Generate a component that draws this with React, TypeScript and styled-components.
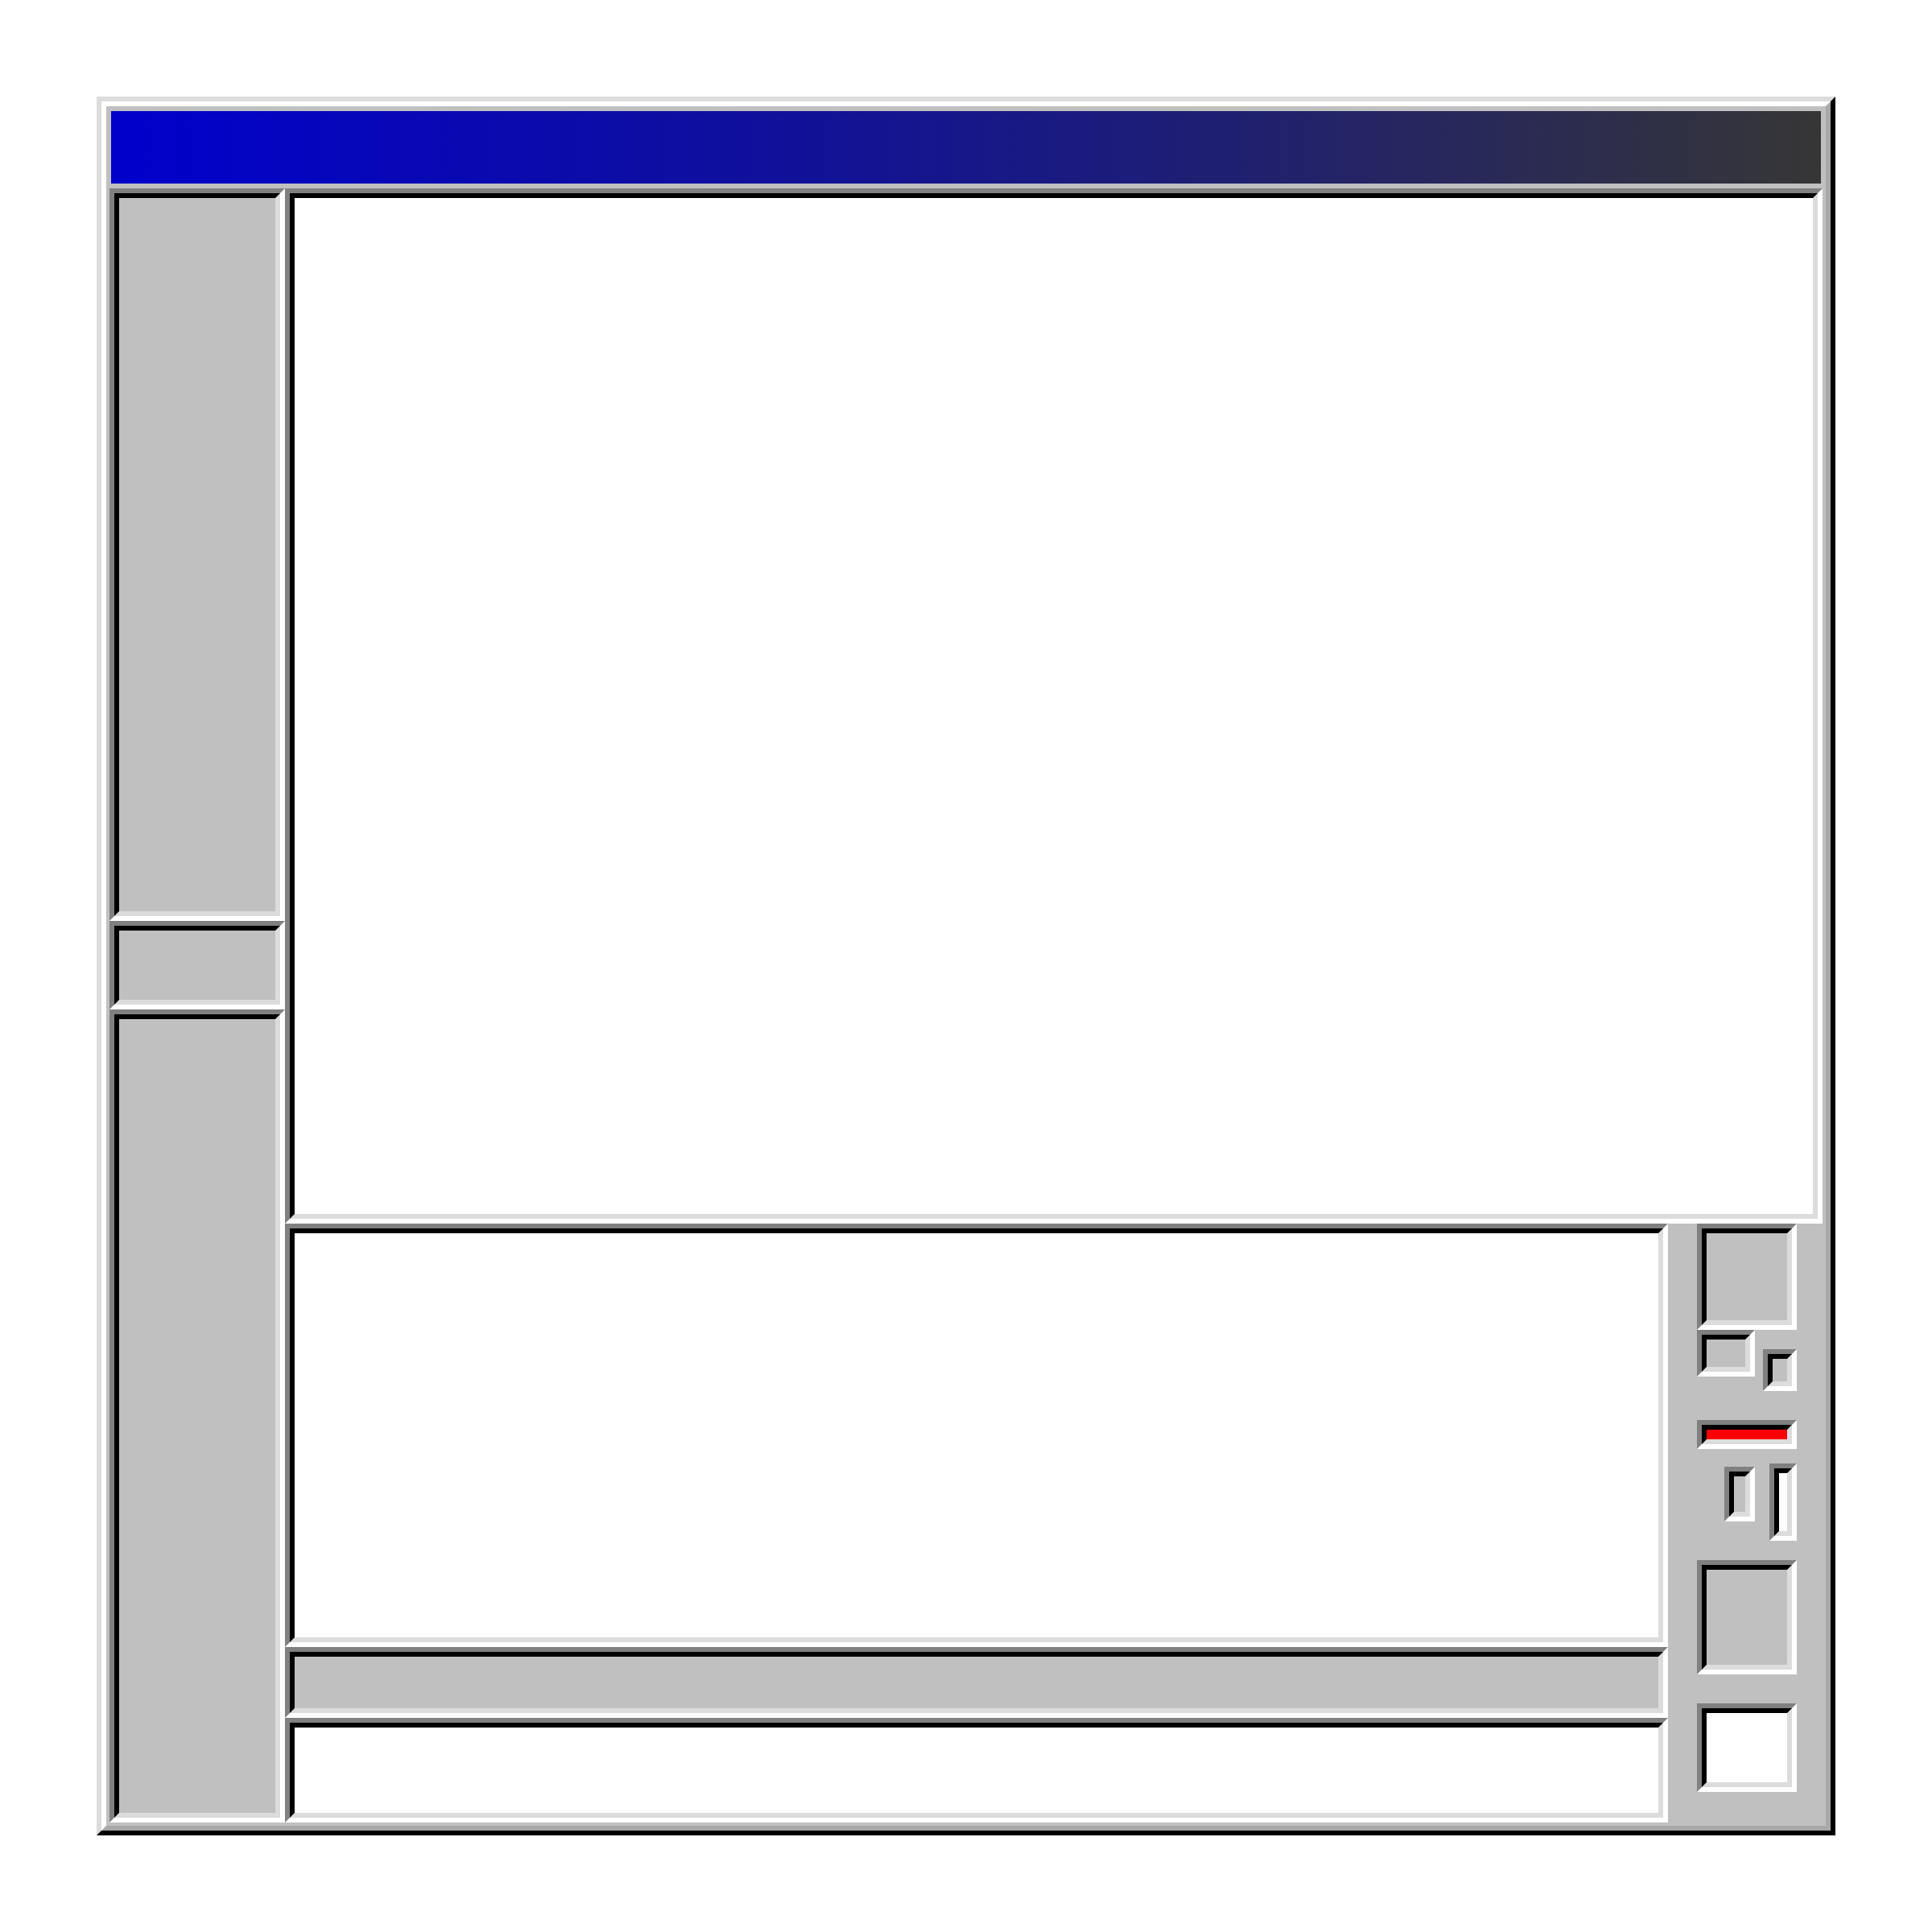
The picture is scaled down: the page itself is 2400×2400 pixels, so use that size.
import React from "react";
import styled, { createGlobalStyle } from "styled-components";

const GlobalStyle = createGlobalStyle`
    html, body {
        margin: 0;
        padding: 0;
        background: #ffffff;
        font-family: "Liberation Sans", Arial, sans-serif;
    }
    * {
        box-sizing: border-box;
    }
`

const Page = styled.div`
    padding: 120px;
    width: 2400px;
    height: 2400px;
`

// raised frame of the whole window: two 6px bevel rings
const WindowFrame = styled.div`
    width: 2160px;
    height: 2160px;
    display: flex;
    border: 6px solid;
    border-color: #dcdcdc #000000 #000000 #dcdcdc;
`

const WindowInner = styled.div`
    flex: 1;
    display: flex;
    flex-direction: column;
    border: 6px solid;
    border-color: #ffffff #a8a8a8 #a8a8a8 #ffffff;
    background: #c0c0c0;
`

const TitleBar = styled.div`
    height: 90px;
    margin: 6px 6px 6px 6px;
    background: linear-gradient(to right, #0000cc 0%, #111199 40%, #22226a 70%, #363636 100%);
`

const Body = styled.div`
    flex: 1;
    display: flex;
    flex-direction: row;
    padding: 0 4px 4px 4px;
`

const Column = styled.div<{ $w?: number }>`
    display: flex;
    flex-direction: column;
    width: ${p => (p.$w ? `${p.$w}px` : "auto")};
    flex: ${p => (p.$w ? "none" : "1")};
`

const Row = styled.div<{ $h?: number }>`
    display: flex;
    flex-direction: row;
    height: ${p => (p.$h ? `${p.$h}px` : "auto")};
`

// sunken well: outer ring grey/white, inner ring black/light grey
const Well = styled.div<{ $w?: number; $h?: number }>`
    display: flex;
    flex: none;
    width: ${p => (p.$w ? `${p.$w}px` : "auto")};
    height: ${p => (p.$h ? `${p.$h}px` : "auto")};
    border: 6px solid;
    border-color: #808080 #ffffff #ffffff #808080;
`

const WellFace = styled.div<{ $bg?: string }>`
    flex: 1;
    border: 6px solid;
    border-color: #000000 #dcdcdc #dcdcdc #000000;
    background: ${p => p.$bg || "#c0c0c0"};
`

const Toolbar = styled.div`
    width: 192px;
    flex: none;
    display: flex;
    flex-direction: column;
    padding-left: 36px;
    background: #c0c0c0;
`

const ToolRow = styled.div<{ $top?: number; $left?: number; $gap?: number }>`
    display: flex;
    flex-direction: row;
    align-items: flex-start;
    margin-top: ${p => p.$top || 0}px;
    padding-left: ${p => p.$left || 0}px;
    gap: ${p => p.$gap || 0}px;
`

const Spaced = styled.div<{ $top?: number }>`
    margin-top: ${p => p.$top || 0}px;
`

const Pane = (props: { w?: number; h?: number; bg?: string }) => (
    <Well $w={props.w} $h={props.h}>
        <WellFace $bg={props.bg} />
    </Well>
)

export default function App() {
    return (
        <>
            <GlobalStyle />
            <Page>
                <WindowFrame>
                    <WindowInner>
                        <TitleBar />
                        <Body>
                            <Column $w={218}>
                                <Pane h={910} />
                                <Pane h={110} />
                                <Pane h={1010} />
                            </Column>
                            <Column>
                                <Pane h={1286} bg="#ffffff" />
                                <Row $h={744}>
                                    <Column>
                                        <Pane h={526} bg="#ffffff" />
                                        <Pane h={88} />
                                        <Pane h={130} bg="#ffffff" />
                                    </Column>
                                    <Toolbar>
                                        <Pane w={124} h={132} />
                                        <ToolRow $gap={10}>
                                            <Pane w={72} h={58} />
                                            <Spaced $top={24}>
                                                <Pane w={42} h={52} />
                                            </Spaced>
                                        </ToolRow>
                                        <Spaced $top={36}>
                                            <Pane w={124} h={36} bg="#ff0000" />
                                        </Spaced>
                                        <ToolRow $top={18} $left={34} $gap={18}>
                                            <Spaced $top={4}>
                                                <Pane w={38} h={68} />
                                            </Spaced>
                                            <Pane w={34} h={96} bg="#ffffff" />
                                        </ToolRow>
                                        <Spaced $top={24}>
                                            <Pane w={124} h={142} />
                                        </Spaced>
                                        <Spaced $top={36}>
                                            <Pane w={124} h={110} bg="#ffffff" />
                                        </Spaced>
                                    </Toolbar>
                                </Row>
                            </Column>
                        </Body>
                    </WindowInner>
                </WindowFrame>
            </Page>
        </>
    )
}
